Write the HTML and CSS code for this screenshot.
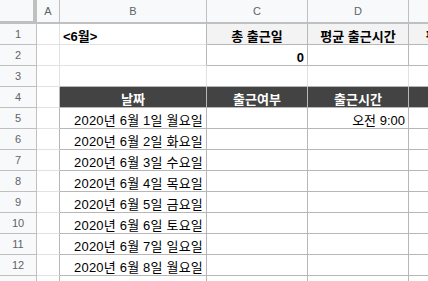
FILE: index.html
```html
<!DOCTYPE html>
<html lang="ko">
<head>
<meta charset="utf-8">
<link rel="stylesheet" href="styles.css">
</head>
<body>
<div class="sheet">
  <div class="c corner"></div>
  <div class="c ch">A</div>
  <div class="c ch">B</div>
  <div class="c ch">C</div>
  <div class="c ch">D</div>
  <div class="c ch">E</div>

  <div class="c rh">1</div>
  <div class="c"></div>
  <div class="c bold dr">&lt;6월&gt;</div>
  <div class="c bold dr db fill center">총 출근일</div>
  <div class="c bold dr db fill center">평균 출근시간</div>
  <div class="c bold dr db fill center">평균 퇴근시간</div>

  <div class="c rh">2</div>
  <div class="c"></div>
  <div class="c dr"></div>
  <div class="c bold dr db right">0</div>
  <div class="c dr db"></div>
  <div class="c dr db"></div>

  <div class="c rh">3</div>
  <div class="c"></div>
  <div class="c db"></div>
  <div class="c db"></div>
  <div class="c db"></div>
  <div class="c db"></div>

  <div class="c rh">4</div>
  <div class="c dr"></div>
  <div class="c th">날짜</div>
  <div class="c th">출근여부</div>
  <div class="c th">출근시간</div>
  <div class="c th"></div>

  <div class="c rh">5</div>
  <div class="c dr"></div>
  <div class="c dr db right date">2020년 6월 1일 월요일</div>
  <div class="c dr db"></div>
  <div class="c dr db right">오전 9:00</div>
  <div class="c dr db"></div>

  <div class="c rh">6</div>
  <div class="c dr"></div>
  <div class="c dr db right date">2020년 6월 2일 화요일</div>
  <div class="c dr db"></div>
  <div class="c dr db"></div>
  <div class="c dr db"></div>

  <div class="c rh">7</div>
  <div class="c dr"></div>
  <div class="c dr db right date">2020년 6월 3일 수요일</div>
  <div class="c dr db"></div>
  <div class="c dr db"></div>
  <div class="c dr db"></div>

  <div class="c rh">8</div>
  <div class="c dr"></div>
  <div class="c dr db right date">2020년 6월 4일 목요일</div>
  <div class="c dr db"></div>
  <div class="c dr db"></div>
  <div class="c dr db"></div>

  <div class="c rh">9</div>
  <div class="c dr"></div>
  <div class="c dr db right date">2020년 6월 5일 금요일</div>
  <div class="c dr db"></div>
  <div class="c dr db"></div>
  <div class="c dr db"></div>

  <div class="c rh">10</div>
  <div class="c dr"></div>
  <div class="c dr db right date">2020년 6월 6일 토요일</div>
  <div class="c dr db"></div>
  <div class="c dr db"></div>
  <div class="c dr db"></div>

  <div class="c rh">11</div>
  <div class="c dr"></div>
  <div class="c dr db right date">2020년 6월 7일 일요일</div>
  <div class="c dr db"></div>
  <div class="c dr db"></div>
  <div class="c dr db"></div>

  <div class="c rh">12</div>
  <div class="c dr"></div>
  <div class="c dr db right date">2020년 6월 8일 월요일</div>
  <div class="c dr db"></div>
  <div class="c dr db"></div>
  <div class="c dr db"></div>

  <div class="c rh"></div>
  <div class="c dr"></div>
  <div class="c dr db"></div>
  <div class="c dr db"></div>
  <div class="c dr db"></div>
  <div class="c dr db"></div>
</div>
</body>
</html>
```

FILE: styles.css
```css
html, body {
  margin: 0;
  padding: 0;
  background: #ffffff;
  overflow: hidden;
}

.sheet {
  display: grid;
  grid-template-columns: 37px 23px 147px 101px 101px 110px;
  grid-template-rows: 24px repeat(13, 21px);
  width: 428px;
  height: 281px;
  overflow: hidden;
}

.c {
  box-sizing: border-box;
  border-right: 1px solid #e2e2e2;
  border-bottom: 1px solid #e2e2e2;
  font-family: "Liberation Sans", Arial, "Noto Sans CJK KR", sans-serif;
  font-size: 13px;
  line-height: 15px;
  color: #000000;
  white-space: nowrap;
  overflow: hidden;
  display: flex;
  align-items: flex-end;
  padding: 0 3px 0 3px;
}

.corner {
  background: #f8f9fa;
  border-right: 4px solid #c0c0c0;
  border-bottom: 3px solid #c0c0c0;
}

.ch {
  background: #f8f9fa;
  border-right: 1px solid #c0c0c0;
  border-bottom: 2px solid #c0c0c0;
  color: #5f6368;
  font-size: 11px;
  justify-content: center;
  align-items: center;
}

.rh {
  background: #f8f9fa;
  border-right: 1px solid #c0c0c0;
  border-bottom: 1px solid #c0c0c0;
  color: #5f6368;
  font-size: 11px;
  justify-content: center;
  align-items: center;
}

.bold { font-weight: bold; }
.dr { border-right-color: #b7b7b7; }
.db { border-bottom-color: #b7b7b7; }
.fill { background: #f3f3f3; }
.center { justify-content: center; }
.right { justify-content: flex-end; }
.date { letter-spacing: 0.2px; }

.th {
  background: #434343;
  color: #ffffff;
  font-weight: bold;
  justify-content: center;
  border-right-color: #b7b7b7;
  border-bottom-color: #b7b7b7;
}
```
